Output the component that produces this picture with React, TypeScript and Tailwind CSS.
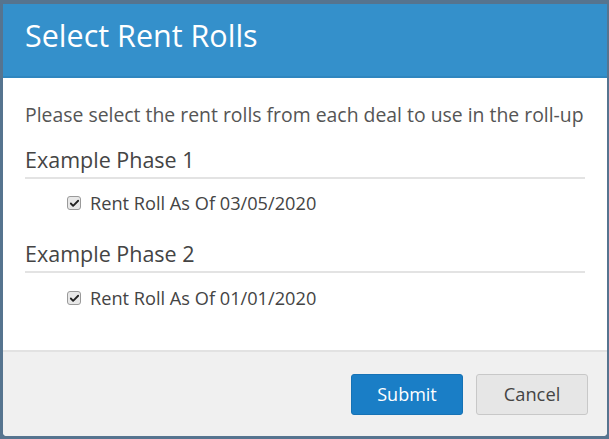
import { Check } from "lucide-react"

const Row = ({ label, top }: { label: string; top: string }) => (
    <label className={`flex items-center gap-[9px] pl-[42px] ${top} text-[18.2px] leading-[24px] text-[#444]`}>
        <span className="w-[14px] h-[14px] rounded-[3px] border border-[#9a9a9a] bg-[#e8e8e8] flex items-center justify-center">
            <Check size={11} strokeWidth={4} className="text-[#222]" />
        </span>
        <span>{label}</span>
    </label>
)

export default function App() {
    return (
        <div className="w-[609px] h-[439px] bg-[#56748f] pt-[4px] pl-[3px] pr-[2px] pb-[3px] overflow-hidden" style={{ fontFamily: '"Open Sans", sans-serif' }}>
            <div className="h-full flex flex-col bg-white rounded-b-[4px] overflow-hidden">
                <div className="h-[74px] shrink-0 bg-[#3490cb] border-b-2 border-[#2f86bf] flex items-center pl-[22px] pb-[8px]">
                    <h1 className="text-[30.5px] text-white">Select Rent Rolls</h1>
                </div>
                <div className="flex-1 px-[22px] pt-[24px]">
                    <p className="text-[19.4px] leading-[26px] text-[#555] whitespace-nowrap">Please select the rent rolls from each deal to use in the roll-up</p>
                    <h2 className="text-[21.5px] leading-[28px] text-[#444] mt-[18px] pb-[3px] border-b-2 border-[#e3e3e3]">Example Phase 1</h2>
                    <Row label="Rent Roll As Of 03/05/2020" top="mt-[12px]" />
                    <h2 className="text-[21.5px] leading-[28px] text-[#444] mt-[25px] pb-[3px] border-b-2 border-[#e3e3e3]">Example Phase 2</h2>
                    <Row label="Rent Roll As Of 01/01/2020" top="mt-[13px]" />
                </div>
                <div className="h-[86px] shrink-0 bg-[#f0f0f0] border-t-2 border-[#e2e2e2] flex items-center justify-end gap-[13px] pr-[19px]">
                    <button className="w-[112px] h-[41px] rounded-[3px] bg-[#1a7ec6] border border-[#1672b5] text-white text-[18px]">Submit</button>
                    <button className="w-[112px] h-[41px] rounded-[3px] bg-[#e6e6e6] border border-[#c8c8c8] text-[#444] text-[18.3px]">Cancel</button>
                </div>
            </div>
        </div>
    )
}
